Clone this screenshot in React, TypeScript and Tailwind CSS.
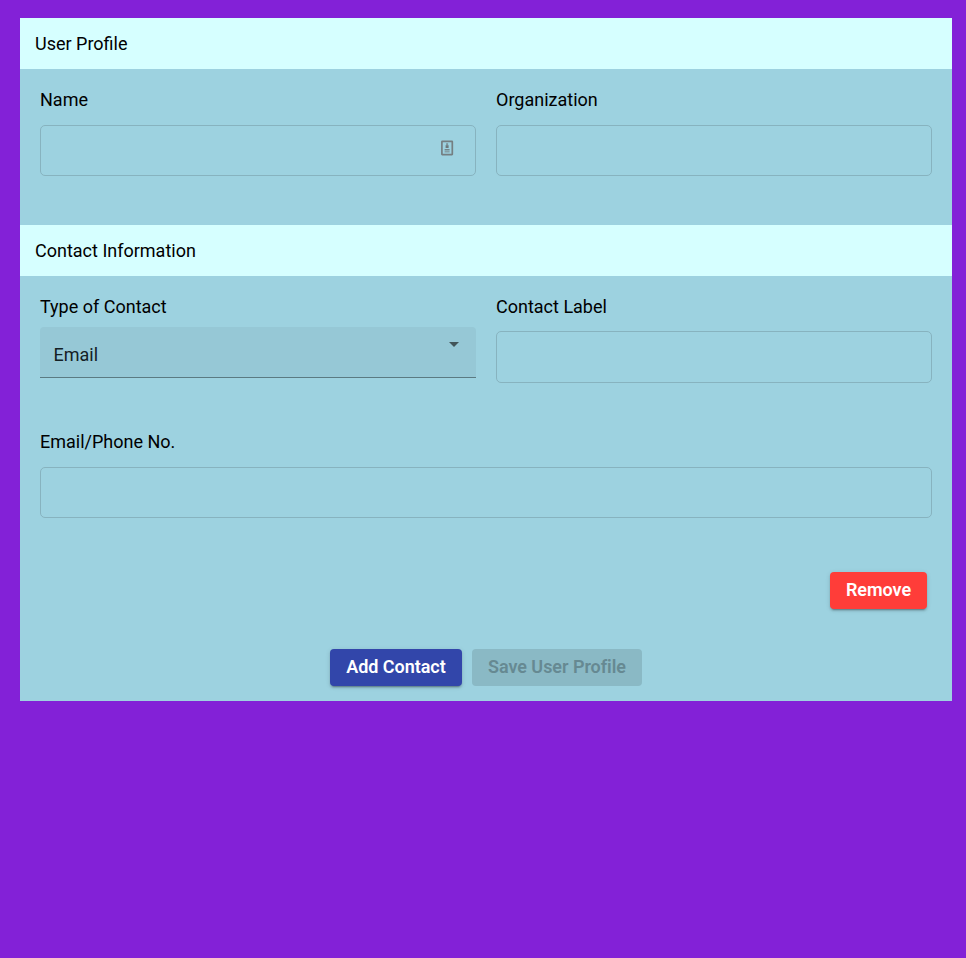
import React from "react";

const label = "block h-[26px] text-[18px] leading-[26px] font-normal text-black";
const input = "block w-full rounded-[5px] border border-[#87b3bf] bg-transparent px-3 outline-none";

function SectionHeader({ children }: { children: React.ReactNode }) {
  return (
    <h2 className="flex h-[51px] items-center bg-[#d6ffff] pl-[15px] text-[18px] font-normal text-black">
      {children}
    </h2>
  );
}

export default function App() {
  return (
    <div className="min-h-screen bg-[#8321d7] pt-[18px] pr-[14px] pl-5 font-['Roboto',sans-serif]">
      <form className="h-[683px] bg-[#9dd2e0]">
        <SectionHeader>User Profile</SectionHeader>
        <div className="grid h-[156px] grid-cols-2 gap-x-5 px-5 pt-[18px]">
          <label className={label}>
            Name
            <span className="mt-3 flex h-[51px] items-start justify-end rounded-[5px] border border-[#87b3bf] pt-[14px] pr-[21px]">
              <svg className="h-4 w-[13px]" viewBox="0 0 13 16" fill="none">
                <rect x="0.9" y="1.4" width="10.4" height="13.2" rx="0.3" stroke="#747f82" strokeWidth="1.7" />
                <path d="M5.1 3.2h2v2h-2z" fill="#7b959c" />
                <path d="M4.6 5.2h3v2.8h-3z" fill="#6d787b" />
                <path d="M3.6 9h5v1.5h-5z" fill="#74868b" />
                <path d="M3.6 11h5v1.5h-5z" fill="#86a0a7" />
              </svg>
            </span>
          </label>
          <label className={label}>
            Organization
            <input className={`${input} mt-3 h-[51px]`} />
          </label>
        </div>
        <SectionHeader>Contact Information</SectionHeader>
        <div className="grid h-[135px] grid-cols-2 gap-x-5 px-5 pt-[18px]">
          <div className={label}>
            Type of Contact
            <div className="mt-[7px] flex h-[51px] justify-between rounded-t-[4px] border-b border-[#5b7a82] bg-[#96c8d6] pr-[17px] pl-[13.5px] text-[#142024]">
              <span className="pt-[15px]">Email</span>
              <svg className="mt-[15px] h-[5px] w-[10px]" viewBox="0 0 10 5">
                <path d="M0 0h10L5 5z" fill="#425559" />
              </svg>
            </div>
          </div>
          <label className={label}>
            Contact Label
            <input className={`${input} mt-[11px] h-[52px]`} />
          </label>
        </div>
        <div className="px-5 pt-[18px]">
          <label className={label}>
            Email/Phone No.
            <input className={`${input} mt-3 h-[51px]`} />
          </label>
        </div>
        <div className="mt-[117px] flex justify-end pr-[25px]">
          <button type="button" className="h-[37px] w-[97px] rounded-[4px] bg-[#ff3d39] pb-[2px] text-[18px] font-semibold tracking-[-0.04px] text-white shadow-[0_3px_1px_-2px_rgba(0,0,0,0.2),0_2px_2px_rgba(0,0,0,0.14),0_1px_5px_rgba(0,0,0,0.12)]">
            Remove
          </button>
        </div>
        <div className="mt-10 flex justify-center gap-[10px]">
          <button type="button" className="h-[37px] w-[132px] rounded-[4px] bg-[#3246aa] pb-[2px] text-[18px] font-semibold tracking-[-0.04px] text-white shadow-[0_3px_1px_-2px_rgba(0,0,0,0.2),0_2px_2px_rgba(0,0,0,0.14),0_1px_5px_rgba(0,0,0,0.12)]">
            Add Contact
          </button>
          <button type="button" disabled className="h-[37px] w-[170px] rounded-[4px] bg-[#8ab9c5] pb-[2px] text-[18px] font-semibold tracking-[-0.04px] text-[#668992]">
            Save User Profile
          </button>
        </div>
      </form>
    </div>
  );
}
